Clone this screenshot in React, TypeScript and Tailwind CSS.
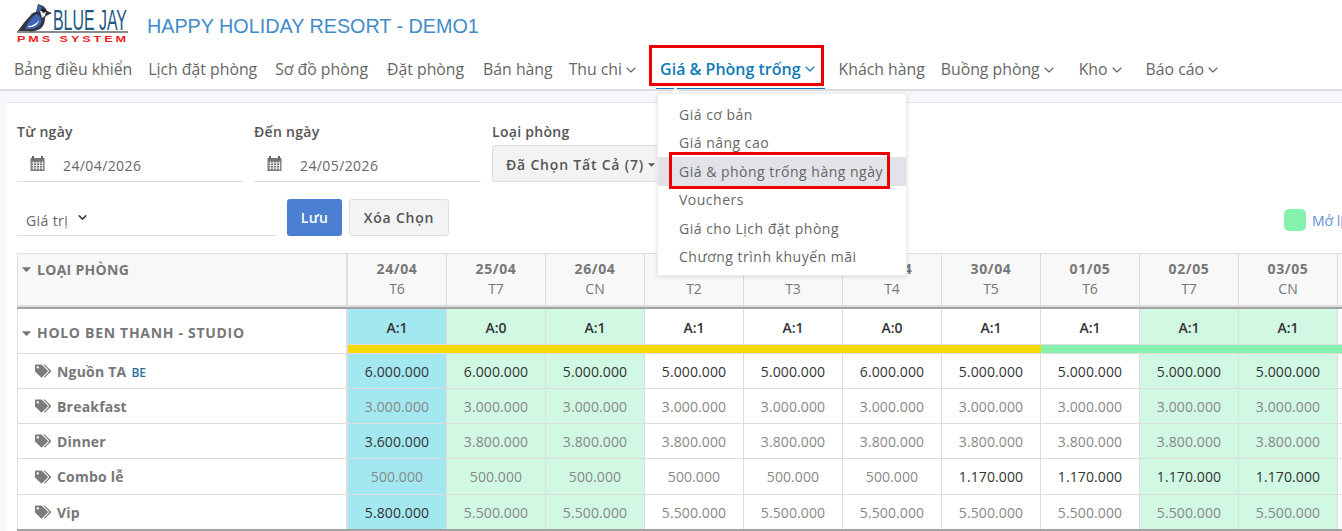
import React from 'react';
import { ChevronDown } from 'lucide-react';
import { FaCaretDown, FaTags } from 'react-icons/fa';

const navItems = [
  { label: 'Bảng điều khiển', cls: 'pl-[9px] pr-[7px]' },
  { label: 'Lịch đặt phòng', cls: 'px-[9px]' },
  { label: 'Sơ đồ phòng', cls: 'pl-[9px] pr-[10px]' },
  { label: 'Đặt phòng', cls: 'pl-[9px] pr-[10px]' },
  { label: 'Bán hàng', cls: 'pl-[9px] pr-[7px]' },
  { label: 'Thu chi', cls: 'px-[9px]', caret: true },
  { label: 'Giá & Phòng trống', cls: '', caret: true, active: true },
  { label: 'Khách hàng', cls: 'pl-[9px] pr-[7px]' },
  { label: 'Buồng phòng', cls: 'pl-[9px] pr-[11px]', caret: true },
  { label: 'Kho', cls: 'pl-[9px] pr-[10px]', caret: true },
  { label: 'Báo cáo', cls: 'px-[9px]', caret: true },
];

const menuItems = [
  'Giá cơ bản',
  'Giá nâng cao',
  'Giá & phòng trống hàng ngày',
  'Vouchers',
  'Giá cho Lịch đặt phòng',
  'Chương trình khuyến mãi',
];

const days = [
  ['24/04', 'T6', 'A:1'],
  ['25/04', 'T7', 'A:0'],
  ['26/04', 'CN', 'A:1'],
  ['27/04', 'T2', 'A:1'],
  ['28/04', 'T3', 'A:1'],
  ['29/04', 'T4', 'A:0'],
  ['30/04', 'T5', 'A:1'],
  ['01/05', 'T6', 'A:1'],
  ['02/05', 'T7', 'A:1'],
  ['03/05', 'CN', 'A:1'],
];

const rows = [
  { name: 'Nguồn TA', be: true, h: 'h-[35px] border-b', values: ['6.000.000', '6.000.000', '5.000.000', '5.000.000', '5.000.000', '6.000.000', '5.000.000', '5.000.000', '5.000.000', '5.000.000'], muted: [] as number[] },
  { name: 'Breakfast', h: 'h-[35px] border-b', values: Array(10).fill('3.000.000'), muted: [0, 1, 2, 3, 4, 5, 6, 7, 8, 9] },
  { name: 'Dinner', h: 'h-[35px] border-b', values: ['3.600.000', ...Array(9).fill('3.800.000')], muted: [1, 2, 3, 4, 5, 6, 7, 8, 9] },
  { name: 'Combo lễ', h: 'h-[36px] border-b', values: ['500.000', '500.000', '500.000', '500.000', '500.000', '500.000', '1.170.000', '1.170.000', '1.170.000', '1.170.000'], muted: [0, 1, 2, 3, 4, 5] },
  { name: 'Vip', h: 'h-[34px]', values: ['5.800.000', ...Array(9).fill('5.500.000')], muted: [1, 2, 3, 4, 5, 6, 7, 8, 9] },
];

function cellBg(i: number) {
  if (i === 0) return 'bg-[#a3e8f0]';
  if (i === 1 || i === 2 || i === 8 || i === 9) return 'bg-[#d0f8e3]';
  return 'bg-white';
}

const Logo = () => (
  <div className="w-[111px] h-[43px] relative">
    <div className="flex items-start h-[29px] w-full">
      <svg width="36" height="29" viewBox="0 0 36 29" className="shrink-0">
        <path d="M1 28 C5 22 9 17 13 13 C15 10 17 9 19 9 L21 1 L26 3 C28 4 29 6 30 8 L35 10 L29 13 L28 15 C28 20 26 24 23 26 C19 28 15 29 11 28 Z" fill="#33363f" />
        <path d="M8 26 C10 20 14 15 19 11 C23 12 25 16 24 20 C22 24 16 27 8 26 Z" fill="#3f63b4" />
        <path d="M11 23 C15 23 19 21 22 17 C21 22 16 25 11 24 Z" fill="#f1f4fb" />
        <path d="M21 2 L25 4 L24 8 L20 9 Z" fill="#3f63b4" />
        <path d="M23 8 L29 8 L28 13 L25 15 Z" fill="#ececec" />
        <path d="M24 6 L30 8 L26 10 Z" fill="#111" />
      </svg>
      <span className="font-['Liberation_Sans',sans-serif] text-[#1d5a84] text-[30px] leading-[28px] mt-[3px] scale-x-[0.53] origin-left whitespace-nowrap">
        BLUE JAY
      </span>
    </div>
    <div className="w-full h-[2px] mt-[-1px] bg-[#8a8a8a]" />
    <span className="block font-['Liberation_Sans',sans-serif] text-[#f01c24] text-[9px] leading-[10px] font-bold tracking-[2.1px] scale-x-[1.4] origin-left whitespace-nowrap mt-[1px]">
      PMS SYSTEM
    </span>
  </div>
);

const CalendarIcon = () => (
  <svg width="15" height="15" viewBox="0 0 15 15" className="shrink-0 mr-[18px] mb-[4px]">
    <rect x="0.5" y="2" width="14" height="13" fill="#777" />
    <rect x="2" y="0" width="2" height="3.5" fill="#666" />
    <rect x="11" y="0" width="2" height="3.5" fill="#666" />
    <path d="M3.5 5.5 V14 M6.5 5.5 V14 M9.5 5.5 V14 M12.5 5.5 V14 M1.5 7 H13.5 M1.5 9.5 H13.5 M1.5 12 H13.5" stroke="#eee" strokeWidth="0.9" />
  </svg>
);

const RowTagIcon = () => <FaTags className="text-[#7d7a7a] w-[16px] h-[16px] mr-[6px] shrink-0" />;

export default function App() {
  return (
    <div className="relative w-[1342px] h-[531px] overflow-hidden bg-[#f5f7fb] font-['Open_Sans',sans-serif] text-[#555]">
      <header className="bg-white h-[91px] border-b-[2px] border-[#dcdde1]">
        <div className="flex items-start pl-[17px] pt-[3px] h-[47px]">
          <Logo />
          <h1 className="ml-[19px] mt-[11px] font-['Liberation_Sans',sans-serif] text-[19.75px] leading-[24px] text-[#428bca] whitespace-nowrap">
            HAPPY HOLIDAY RESORT - DEMO1
          </h1>
        </div>
        <nav className="flex items-start pl-[5px] h-[42px]">
          {navItems.map((item) => (
            <a
              key={item.label}
              className={
                'flex items-center h-[42px] pt-[3px] whitespace-nowrap ' +
                item.cls +
                (item.active
                  ? ' pl-[4px] pr-[7px] ml-[6px] mr-[5px] text-[16px] font-semibold text-[#0f7ab8] border-b border-[#0f7ab8]'
                  : ' text-[15.8px] text-[#666]')
              }
            >
              {item.label}
              {item.caret && (
                <ChevronDown
                  className={'w-[16px] h-[16px] ml-[1px] ' + (item.active ? '' : 'mr-[2px]')}
                  strokeWidth={1.75}
                />
              )}
            </a>
          ))}
        </nav>
      </header>

      <main className="ml-[6px] mt-[11px] bg-white border-t border-[#dfe3ec] h-[429px] pl-[11px] pt-[19px]">
        <div className="flex items-start">
          <div className="w-[226px] mr-[11px]">
            <label className="block text-[14px] leading-[19px] font-semibold tracking-[0.3px] text-[#555]">Từ ngày</label>
            <div className="flex items-center h-[32px] mt-[9px] border-b border-[#ddd] pl-[13px] text-[14px] tracking-[0.4px] text-[#666]">
              <CalendarIcon />
              24/04/2026
            </div>
          </div>
          <div className="w-[227px] mr-[11px]">
            <label className="block text-[14px] leading-[19px] font-semibold tracking-[0.3px] text-[#555]">Đến ngày</label>
            <div className="flex items-center h-[32px] mt-[9px] border-b border-[#ddd] pl-[13px] text-[14px] tracking-[0.4px] text-[#666]">
              <CalendarIcon />
              24/05/2026
            </div>
          </div>
          <div>
            <label className="block text-[14px] leading-[19px] font-semibold tracking-[0.3px] text-[#555]">Loại phòng</label>
            <button className="flex items-center h-[37px] w-[190px] mt-[4px] pl-[13px] pt-[1px] bg-[#f3f3f3] border border-[#ddd] rounded-[3px] text-[14px] font-semibold tracking-[0.8px] text-[#555] whitespace-nowrap">
              Đã Chọn Tất Cả (7)
              <FaCaretDown className="w-[7px] h-[11px] ml-[4px]" />
            </button>
          </div>
        </div>

        <div className="flex items-start mt-[17px] relative">
          <div className="flex items-center w-[259px] h-[37px] border-b border-[#ddd] pl-[9px] pt-[6px] text-[14px] tracking-[0.4px] text-[#666]">
            Giá trị
            <ChevronDown className="w-[13px] h-[13px] ml-[8px] mb-[6px] text-[#444]" strokeWidth={3} />
          </div>
          <button className="ml-[11px] w-[55px] h-[37px] bg-[#4a7fd1] rounded-[3px] text-white text-[14px] font-semibold tracking-[0.4px]">Lưu</button>
          <button className="ml-[7px] w-[100px] h-[37px] bg-[#f3f3f3] border border-[#ddd] rounded-[3px] text-[14px] font-semibold tracking-[0.8px] text-[#555]">Xóa Chọn</button>
          <div className="absolute left-[1267px] top-[10px] flex items-center text-[14px] text-[#5b8fd9] whitespace-nowrap">
            <span className="w-[22px] h-[22px] rounded-[5px] bg-[#86f0ad] mr-[6px]" />
            Mở lịch
          </div>
        </div>

        <div className="mt-[17px] w-[1400px] text-[14px]">
          <div className="flex h-[52px] border-t border-[#ddd] bg-[#f8f8f8] text-[#777]">
            <div className="w-[331px] shrink-0 border-l border-r-[2px] border-[#ddd] pl-[4px] pt-[5px] flex items-start font-bold tracking-[0.3px]">
              <FaCaretDown className="w-[9px] h-[14px] mt-[3px] mr-[6px]" />
              LOẠI PHÒNG
            </div>
            {days.map((d) => (
              <div key={d[0]} className="w-[99px] shrink-0 border-r border-[#ddd] text-center pt-[5px] leading-[20px]">
                <div className="font-bold tracking-[0.6px]">{d[0]}</div>
                <div>{d[1]}</div>
              </div>
            ))}
          </div>
          <div className="h-[2px] bg-[#ddd]" />
          <div className="h-[2px] bg-[#a3a3a3]" />

          <div className="flex h-[45px] border-b border-[#ddd]">
            <div className="w-[331px] shrink-0 border-l border-r-[2px] border-[#ddd] pl-[4px] pt-[3px] flex items-center font-bold tracking-[0.7px] text-[#777]">
              <FaCaretDown className="w-[9px] h-[14px] mr-[6px]" />
              HOLO BEN THANH - STUDIO
            </div>
            {days.map((d, i) => (
              <div key={d[0]} className="w-[99px] shrink-0 flex flex-col">
                <div className={'h-[36px] pt-[2px] flex items-center justify-center font-semibold text-[#333] border-b border-r border-[#ddd] ' + cellBg(i)}>{d[2]}</div>
                <div className={'h-[8px] ' + (i < 7 ? 'bg-[#f7d800]' : 'bg-[#86f0ad]')} />
              </div>
            ))}
            <div className="flex-1 flex flex-col">
              <div className="h-[36px] border-b border-[#ddd]" />
              <div className="h-[8px] bg-[#86f0ad]" />
            </div>
          </div>

          {rows.map((row) => (
            <div key={row.name} className={'flex border-[#ddd] ' + row.h}>
              <div className="w-[331px] shrink-0 border-l border-r-[2px] border-[#ddd] pl-[17px] flex items-center font-bold tracking-[0.2px] text-[#777]">
                <RowTagIcon />
                {row.name}
                {row.be && <span className="ml-[5px] mt-[3px] text-[12px] font-semibold tracking-normal text-[#1f6f9f]">BE</span>}
              </div>
              {row.values.map((v, i) => (
                <div
                  key={i}
                  className={
                    'w-[99px] shrink-0 flex items-center justify-center border-r border-[#ddd] tracking-[0.1px] ' +
                    cellBg(i) +
                    (row.muted.includes(i) ? ' text-[#888]' : ' text-[#333]')
                  }
                >
                  {v}
                </div>
              ))}
            </div>
          ))}
          <div className="h-[2px] bg-[#a3a3a3]" />
        </div>
      </main>

      <div className="absolute left-[671px] top-[89px] w-[9px] h-[9px] rotate-45 bg-white border-l border-t border-[#e6e6e6]" />
      <div className="absolute left-[657px] top-[93px] w-[250px] h-[183px] bg-white rounded-[3px] border border-[#eee] shadow-[0_1px_4px_rgba(0,0,0,0.12)] pt-[6px] text-[14px] tracking-[0.5px] text-[#666]">
        {menuItems.map((m, i) => (
          <div key={m} className={'h-[28.5px] flex items-center pl-[21px] whitespace-nowrap ' + (i === 2 ? 'bg-[#e2e3e8]' : '')}>{m}</div>
        ))}
      </div>
      <div className="absolute left-[649px] top-[45px] w-[175px] h-[41px] border-[3px] border-[#ee0000]" />
      <div className="absolute left-[669px] top-[152px] w-[221px] h-[37px] border-[3px] border-[#ee0000]" />
    </div>
  );
}
